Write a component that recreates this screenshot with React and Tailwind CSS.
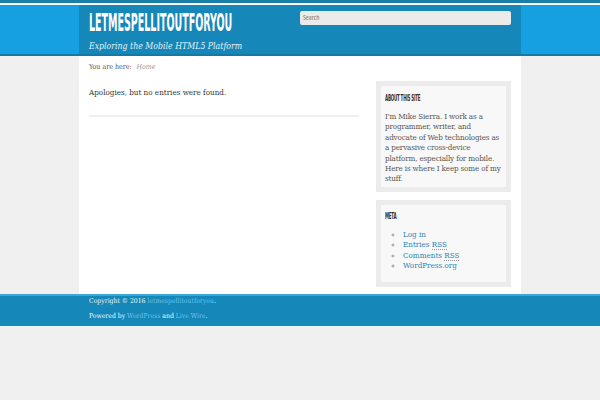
import React from 'react';

const serif = { fontFamily: '"DejaVu Serif", serif', fontStretch: 'condensed' };
const condensed = { fontFamily: '"DejaVu Sans Condensed", "DejaVu Sans", sans-serif' };

const Widget = ({ title, children, tight }) => (
  <div className="bg-[#ececec] p-[5px]">
    <div className={tight ? 'bg-[#f8f8f8] px-[4px] pt-[7px] pb-[2px]' : 'bg-[#f8f8f8] px-[4px] pt-[6px] pb-[10px]'}>
      <h3 className="text-[#333] font-bold uppercase text-[9px] leading-[10px] tracking-[-0.5px] origin-left scale-x-[0.5] whitespace-nowrap" style={condensed}>
        {title}
      </h3>
      {children}
    </div>
  </div>
);

export default function App() {
  return (
    <div className="min-h-[400px] bg-[#f0f0f0]" style={serif}>
      {/* header */}
      <div className="border-t-[3px] border-[#1a7fa6] pt-[2px] bg-white">
        <div className="bg-[#16a0e2] border-b-2 border-[#137aa2]">
          <div className="w-[442px] mx-auto bg-[#1587b8] h-[49px] flex px-[10px]">
            <div className="w-[211px] pt-[5px]">
              <div className="text-white font-bold text-[24px] leading-[27px] origin-left scale-x-[0.44] whitespace-nowrap" style={condensed}>
                LETMESPELLITOUTFORYOU
              </div>
              <div className="text-[#e3f2f9] italic text-[8.7px] leading-[12px] mt-[3px] whitespace-nowrap">
                Exploring the Mobile HTML5 Platform
              </div>
            </div>
            <div className="flex-1 pt-[6px]">
              <div className="bg-[#ebebeb] rounded-[2px] h-[14px] px-[3px] text-[7px] leading-[14px] text-[#777]" style={{ fontFamily: '"Open Sans", sans-serif' }}>
                Search
              </div>
            </div>
          </div>
        </div>
      </div>

      {/* content */}
      <div className="w-[442px] mx-auto bg-white h-[238px] px-[10px] flex gap-[17px]">
        <div className="w-[270px]">
          <div className="pt-[7px] text-[7px] leading-[9px] text-[#555]">
            <span className="text-[#555]">You are here:</span>
            <span className="italic text-[#999] ml-[5px]">Home</span>
          </div>
          <p className="mt-[15px] text-[8px] leading-[11px] text-[#333]">
            Apologies, but no entries were found.
          </p>
          <div className="mt-[17px] h-[2px] bg-[#efefef]" />
        </div>
        <div className="w-[135px] pt-[25px] flex flex-col gap-[8px]">
          <Widget title="About This Site" tight>
            <p className="mt-[9px] text-[8px] leading-[10.4px] tracking-[-0.15px] text-[#555]">
              I'm Mike Sierra. I work as a programmer, writer, and advocate of Web technologies as a pervasive cross-device platform, especially for mobile. Here is where I keep some of my stuff.
            </p>
          </Widget>
          <Widget title="Meta">
            <ul className="mt-[9px] mb-[1px] ml-[18px] list-[circle] text-[8px] leading-[10.4px] text-[#2a86b2] marker:text-[#999]">
              <li>Log in</li>
              <li>Entries <span className="border-b border-dotted border-[#999]">RSS</span></li>
              <li>Comments <span className="border-b border-dotted border-[#999]">RSS</span></li>
              <li>WordPress.org</li>
            </ul>
          </Widget>
        </div>
      </div>

      {/* footer */}
      <div className="bg-[#1587b8] border-t-2 border-[#3aa7d6] h-[32px]">
        <div className="w-[442px] mx-auto px-[10px] pt-[1px] text-[6.8px] leading-[9px] text-[#f2f8fb]">
          <p>Copyright © 2016 <span className="text-[#6cc4ec]">letmespellitoutforyou</span>.</p>
          <p className="mt-[6px]">Powered by <span className="text-[#6cc4ec]">WordPress</span> and <span className="text-[#6cc4ec]">Live Wire</span>.</p>
        </div>
      </div>
      <div className="h-[2px] bg-[#e6f3f9]" />
    </div>
  );
}
